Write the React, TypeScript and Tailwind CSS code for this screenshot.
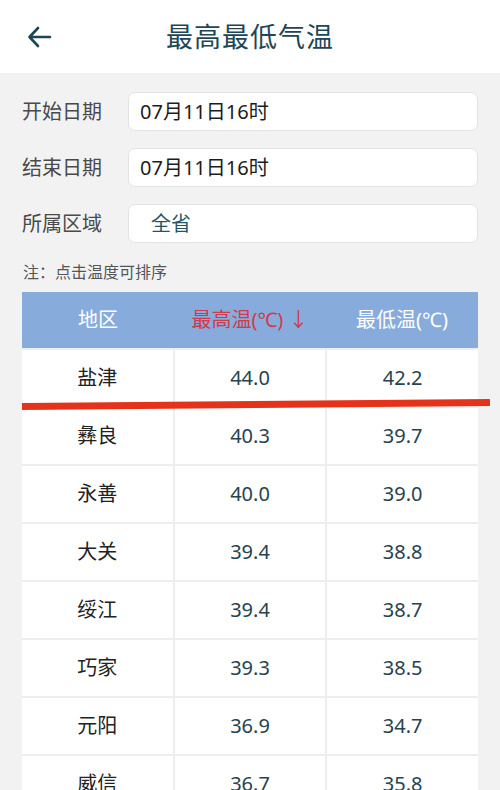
import React from 'react';

const rows: [string, string, string][] = [
  ['盐津', '44.0', '42.2'],
  ['彝良', '40.3', '39.7'],
  ['永善', '40.0', '39.0'],
  ['大关', '39.4', '38.8'],
  ['绥江', '39.4', '38.7'],
  ['巧家', '39.3', '38.5'],
  ['元阳', '36.9', '34.7'],
  ['威信', '36.7', '35.8'],
];

const fields = [
  { label: '开始日期', value: '07月11日16时', accent: false },
  { label: '结束日期', value: '07月11日16时', accent: false },
  { label: '所属区域', value: '全省', accent: true },
];

export default function App() {
  return (
    <div
      className="w-[500px] h-[790px] overflow-hidden bg-[#f2f2f2] relative"
      style={{ fontFamily: '"Noto Sans", "Noto Sans CJK SC", sans-serif' }}
    >
      {/* Header */}
      <header className="h-[73px] bg-white flex items-center relative">
        <svg
          className="absolute left-[27px] top-[25px]"
          width="25"
          height="24"
          viewBox="0 0 25 24"
          fill="none"
          stroke="#1e4656"
          strokeWidth="2.6"
          strokeLinecap="round"
          strokeLinejoin="round"
        >
          <path d="M23 12H3M11 3L2.5 12L11 21" />
        </svg>
        <h1 className="w-full text-center text-[27px] text-[#1e4656] tracking-[1px] leading-none">
          最高最低气温
        </h1>
      </header>

      {/* Filters */}
      <div className="px-[22px] pt-[19px] flex flex-col gap-[17px]">
        {fields.map((f) => (
          <div key={f.label} className="flex items-center gap-[24px]">
            <span className="w-[82px] text-[20px] text-[#4a4a4a] leading-none whitespace-nowrap">{f.label}</span>
            <div
              className={
                'flex-1 h-[39px] bg-white rounded-[7px] border border-[#e3e3e3] flex items-center text-[20px] leading-none ' +
                (f.accent ? 'pl-[22px] text-[#1f5766]' : 'pl-[11px] text-[#1c1c1c]')
              }
            >
              {f.value}
            </div>
          </div>
        ))}
      </div>

      <p className="px-[23px] mt-[21px] text-[16px] text-[#555] leading-none">注：点击温度可排序</p>

      {/* Table */}
      <div className="mx-[22px] mt-[12px] bg-[#eeeeee] flex flex-col gap-[2px]">
        <div className="h-[56px] bg-[#87acdc] grid grid-cols-3 items-center text-center text-[20px] leading-none">
          <span className="text-white">地区</span>
          <span className="text-[#cf3a4c]">最高温(℃) ↓</span>
          <span className="text-white">最低温(℃)</span>
        </div>
        {rows.map(([name, hi, lo]) => (
          <div key={name} className="grid grid-cols-3 gap-[2px] h-[56px]">
            <div className="bg-white flex items-center justify-center text-[20px] text-[#222]">{name}</div>
            <div className="bg-white flex items-center justify-center text-[20px] text-[#26434f]">{hi}</div>
            <div className="bg-white flex items-center justify-center text-[20px] text-[#26434f]">{lo}</div>
          </div>
        ))}
      </div>

      {/* Red annotation line */}
      <div className="absolute left-[22px] top-[403px] w-[468px] h-[7px] bg-[#e5321b] origin-left -rotate-[0.5deg]" />
    </div>
  );
}
